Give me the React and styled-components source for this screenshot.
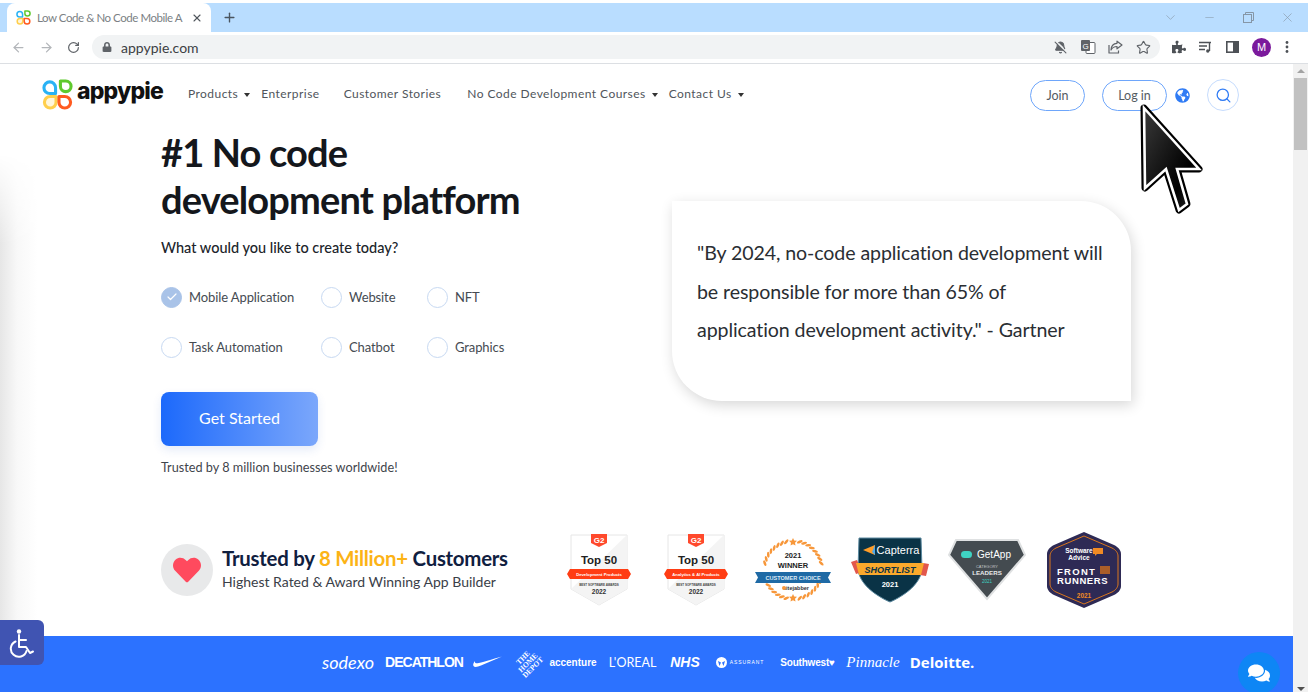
import React from "react";
import styled, { createGlobalStyle } from "styled-components";
import { ArrowLeft, ArrowRight, RotateCw, BellOff, Star, Search, X, Plus, ChevronDown, Minus, Check } from "lucide-react";
import { FaLock, FaPuzzlePiece, FaGlobeAmericas, FaComments, FaHeart } from "react-icons/fa";

const UI = `Lato, "Noto Sans", sans-serif`;

const Global = createGlobalStyle`
  html, body { margin: 0; padding: 0; background: #fff; overflow: hidden; }
  * { box-sizing: border-box; }
  body { font-family: ${UI}; }
`;

const Frame = styled.div`
  position: relative;
  width: 1308px;
  height: 692px;
  overflow: hidden;
  display: flex;
  flex-direction: column;
  padding-top: 3px;
  background: #fff;
`;

/* browser chrome */
const TabStrip = styled.div`
  height: 29px;
  flex: none;
  background: #b9ddff;
  display: flex;
  align-items: flex-end;
  padding-left: 7px;
`;
const Tab = styled.div`
  width: 204px;
  height: 29px;
  background: #fff;
  border-radius: 8px 8px 0 0;
  display: flex;
  align-items: center;
  padding: 0 8px 0 9px;
  font: 11.500px ${UI};
  letter-spacing: -0.45px;
  color: #7b7f84;
  svg { flex: none; }
`;
const TabTitle = styled.span`
  margin-left: 6px;
  flex: 1;
  white-space: nowrap;
`;
const NewTab = styled.div`
  width: 38px;
  height: 29px;
  display: flex;
  align-items: center;
  justify-content: center;
  color: #4a5560;
  margin-left: -1px;
`;
const WinControls = styled.div`
  margin-left: auto;
  height: 29px;
  display: flex;
  align-items: center;
  padding-right: 1px;
  color: #8696a6;
`;
const WinButton = styled.div`
  width: 39px;
  display: flex;
  justify-content: center;
`;
const Toolbar = styled.div`
  height: 32px;
  flex: none;
  display: flex;
  align-items: center;
  background: #fff;
  border-bottom: 1px solid #dcdfe3;
  padding: 0 0 1px 5px;
`;
const NavBtn = styled.div`
  width: 27.500px;
  display: flex;
  justify-content: center;
  color: ${(p) => (p.$on ? "#5f6368" : "#b3b6ba")};
`;
const Omnibox = styled.div`
  margin-left: 4.500px;
  width: 1068px;
  height: 24px;
  border-radius: 12px;
  background: #f1f3f4;
  display: flex;
  align-items: center;
  padding: 0 3px 0 10px;
  font: 14px ${UI};
  color: #3c4043;
`;
const Url = styled.span`
  margin-left: 9px;
`;
const OmniIcons = styled.div`
  margin-left: auto;
  display: flex;
  align-items: center;
  color: #5f6368;
`;
const OmniIcon = styled.div`
  width: 27.500px;
  display: flex;
  justify-content: center;
`;
const ExtIcons = styled.div`
  display: flex;
  align-items: center;
  margin-left: 5px;
  color: #4d5156;
`;
const ExtIcon = styled.div`
  width: ${(p) => p.$w || 27}px;
  display: flex;
  justify-content: center;
`;
const Avatar = styled.div`
  width: 19px;
  height: 19px;
  margin: 0 3px 0 6px;
  border-radius: 50%;
  background: #7b1a9c;
  color: #fff;
  font: 11px "Liberation Sans", sans-serif;
  display: flex;
  align-items: center;
  justify-content: center;
`;

/* page */
const Viewport = styled.div`
  flex: 1;
  display: flex;
  min-height: 0;
`;
const Page = styled.main`
  position: relative;
  flex: 1;
  min-width: 0;
  display: flex;
  flex-direction: column;
  background: #fff;
  &::before {
    content: "";
    position: absolute;
    left: 0;
    top: 90px;
    width: 38px;
    height: 482px;
    background: linear-gradient(to right, #e6e6e6, #f8f8f8 45%, #fff);
    -webkit-mask-image: linear-gradient(to bottom, transparent, #000 90px);
    mask-image: linear-gradient(to bottom, transparent, #000 90px);
  }
`;
const Scrollbar = styled.div`
  width: 15px;
  flex: none;
  background: #f1f1f1;
  display: flex;
  flex-direction: column;
  align-items: center;
  padding-top: 5px;
`;
const ArrowUp = styled.div`
  width: 0;
  height: 0;
  border: 4px solid transparent;
  border-top: 0;
  border-bottom: 4px solid #a3a3a3;
`;
const Thumb = styled.div`
  width: 13px;
  height: 72px;
  margin-top: 5px;
  background: #c1c1c1;
`;
const ArrowDown = styled.div`
  width: 0;
  height: 0;
  margin-top: auto;
  margin-bottom: 1px;
  border: 4px solid transparent;
  border-bottom: 0;
  border-top: 4px solid #505050;
`;

const Nav = styled.nav`
  position: relative;
  height: 62px;
  flex: none;
  display: flex;
  align-items: center;
  padding: 0 54px 0 42px;
`;
const Brand = styled.div`
  display: flex;
  align-items: center;
  width: 146px;
  margin-top: -2px;
`;
const BrandName = styled.span`
  font: 800 23px/1 Inter, sans-serif;
  letter-spacing: -0.8px;
  color: #111;
  margin-left: 4px;
  margin-top: -5px;
`;
const Links = styled.div`
  display: flex;
  align-items: center;
  font: 12px ${UI};
  letter-spacing: 0.45px;
  color: #50555b;
  margin-top: -4px;
`;
const NavLink = styled.span`
  display: inline-flex;
  align-items: center;
  white-space: nowrap;
  margin-right: ${(p) => p.$mr}px;
  &::after {
    content: ${(p) => (p.$caret ? '""' : "none")};
    margin-left: 6px;
    margin-top: 3px;
    border: 3.500px solid transparent;
    border-top: 4px solid #333;
    border-bottom: 0;
  }
`;
const NavRight = styled.div`
  margin-left: auto;
  display: flex;
  align-items: center;
`;
const Pill = styled.div`
  width: ${(p) => p.$w}px;
  height: 31px;
  border: 1px solid #6ea6fb;
  border-radius: 16px;
  margin-right: ${(p) => p.$mr}px;
  display: flex;
  align-items: center;
  justify-content: center;
  font: 12.500px ${UI};
  color: #555c63;
`;
const SearchCircle = styled.div`
  width: 32px;
  height: 32px;
  margin-left: 17px;
  border: 1px solid #c6dcfd;
  border-radius: 50%;
  display: flex;
  align-items: center;
  justify-content: center;
  color: #2f7bf5;
`;

const Hero = styled.section`
  position: relative;
  height: 384px;
  flex: none;
  display: flex;
  padding-left: 161px;
`;
const HeroLeft = styled.div`
  width: 511px;
  flex: none;
`;
const Title = styled.h1`
  margin: 3px 0 0;
  font: 700 38px/47px ${UI};
  letter-spacing: -0.85px;
  color: #14171c;
`;
const Prompt = styled.p`
  margin: 13px 0 0;
  font: 500 14.500px/24px ${UI};
  color: #20242a;
`;
const Options = styled.div`
  margin-top: 25px;
  display: grid;
  grid-template-columns: 160px 106px auto;
  grid-auto-rows: 50px;
`;
const Option = styled.label`
  display: flex;
  align-items: center;
  height: 24px;
  font: 13px ${UI};
  letter-spacing: -0.1px;
  color: #454b52;
`;
const Radio = styled.span`
  width: 21px;
  height: 21px;
  margin-right: 7px;
  border-radius: 50%;
  border: 1px solid ${(p) => (p.$on ? "#a9c3e8" : "#c7d9f2")};
  background: ${(p) => (p.$on ? "#a9c3e8" : "#fff")};
  color: #fff;
  display: flex;
  align-items: center;
  justify-content: center;
`;
const Cta = styled.div`
  width: 157px;
  height: 54px;
  margin-top: 7px;
  padding-bottom: 3px;
  border-radius: 8px;
  background: linear-gradient(90deg, #1c69fb, #7ba7fb);
  box-shadow: 0 4px 10px rgba(40, 90, 200, 0.12);
  color: #fff;
  display: flex;
  align-items: center;
  justify-content: center;
  font: 16px ${UI};
`;
const Note = styled.p`
  margin: 10px 0 0;
  font: 12.700px/22px ${UI};
  color: #3f454c;
`;
const Quote = styled.blockquote`
  margin: 75px 0 0;
  width: 459px;
  height: 200px;
  flex: none;
  padding: 33px 20px 0 25px;
  background: #fff;
  border-radius: 0 50px 0 50px;
  box-shadow: 2px 4px 14px rgba(0, 0, 0, 0.16);
  font: 19.600px/38.500px ${UI};
  letter-spacing: -0.1px;
  color: #2a2e33;
`;

const Trust = styled.section`
  position: relative;
  height: 126px;
  flex: none;
  display: flex;
  align-items: flex-start;
  padding: 20px 0 0 161px;
`;
const HeartDisc = styled.div`
  width: 52px;
  height: 52px;
  flex: none;
  margin-top: 14px;
  border-radius: 50%;
  background: #e8e9ea;
  color: #ff4a5e;
  display: flex;
  align-items: center;
  justify-content: center;
`;
const TrustCopy = styled.div`
  width: 337px;
  flex: none;
  padding: 14px 0 0 9px;
`;
const TrustHead = styled.div`
  font: 700 20.400px/28px ${UI};
  letter-spacing: -0.25px;
  color: #10203f;
  white-space: nowrap;
`;
const Gold = styled.span`
  color: #fcb316;
`;
const TrustSub = styled.div`
  font: 14px/20px ${UI};
  color: #3a4048;
  white-space: nowrap;
`;
const Badges = styled.div`
  display: grid;
  grid-template-columns: repeat(6, 97px);
`;
const BadgeCell = styled.div`
  height: 80px;
  display: flex;
  align-items: center;
  justify-content: center;
`;

const Band = styled.section`
  flex: 1;
  background: #2c72ff;
  display: flex;
  align-items: center;
  padding-left: 321px;
  color: #fff;
  white-space: nowrap;
  padding-bottom: 4px;
`;
const Logo = styled.span`
  flex: none;
  width: ${(p) => p.$w}px;
  margin-right: ${(p) => p.$gap}px;
  display: flex;
  align-items: center;
  justify-content: center;
  gap: 3px;
  font-family: ${(p) => p.$font || `"Liberation Sans", sans-serif`};
  font-size: ${(p) => p.$size}px;
  font-weight: ${(p) => p.$weight || 400};
  font-style: ${(p) => (p.$italic ? "italic" : "normal")};
  letter-spacing: ${(p) => p.$track || 0}px;
`;
const RotatedMark = styled.span`
  display: block;
  transform: rotate(-45deg);
  font: 900 7.500px/7px "Liberation Serif", serif;
  text-align: center;
`;

/* overlays */
const A11y = styled.div`
  position: absolute;
  left: 0;
  top: 620px;
  width: 44px;
  height: 45px;
  border-radius: 0 6px 6px 0;
  background: #4054b2;
  display: flex;
  align-items: center;
  justify-content: center;
`;
const Chat = styled.div`
  position: absolute;
  left: 1238px;
  top: 652px;
  width: 42px;
  height: 42px;
  border-radius: 50%;
  background: #0e86f5;
  color: #fff;
  display: flex;
  align-items: center;
  justify-content: center;
`;
const Pointer = styled.svg`
  position: absolute;
  left: 1138px;
  top: 100px;
`;

const Clover = ({ size }) => (
  <svg width={size} height={size} viewBox="0 0 32 32" fill="none" strokeWidth="3.200" strokeLinejoin="round">
    <path d="M14 15H8A6 6 0 1 1 14 9Z" stroke="#29b2f5" />
    <path d="M19 2H24.500A5.500 5.500 0 1 1 19 7.500Z" stroke="#5fc92e" />
    <path d="M14.500 18V24A6 6 0 1 1 8.500 18Z" stroke="#ffcf4d" fill="#fff6dc" />
    <path d="M17.500 18H23.500A6 6 0 1 1 17.500 24Z" stroke="#ff5a1f" />
  </svg>
);

const TranslateIcon = () => (
  <svg width="16" height="16" viewBox="0 0 16 16">
    <rect x="6" y="3.500" width="9" height="11" rx="1" fill="#fff" stroke="#5f6368" />
    <rect x="1" y="1" width="9" height="11" rx="1" fill="#5f6368" />
    <text x="5.500" y="9.500" textAnchor="middle" fontSize="8" fill="#fff" fontFamily="Liberation Sans">G</text>
  </svg>
);
const ShareIcon = () => (
  <svg width="15" height="14" viewBox="0 0 15 14" fill="none" stroke="#5f6368" strokeWidth="1.200" strokeLinejoin="round">
    <path d="M9 1.200 14 5 9 8.800V6.500C6 6.500 4.300 7.500 3 10c.2-4 2.200-6.500 6-6.700Z" />
    <path d="M1 5v8h9.500v-2.500" />
  </svg>
);
const QueueIcon = () => (
  <svg width="15" height="14" viewBox="0 0 15 14" fill="none" stroke="#4d5156" strokeWidth="1.400">
    <path d="M1 2.500h12M1 6h8M1 9.500h6" />
    <path d="M11.500 3v8" />
    <circle cx="9.800" cy="11" r="1.700" fill="#4d5156" stroke="none" />
  </svg>
);
const SideIcon = () => (
  <svg width="13" height="12" viewBox="0 0 13 12">
    <rect x=".8" y=".8" width="11.400" height="10.400" fill="none" stroke="#4d5156" strokeWidth="1.600" />
    <rect x="7" y="1" width="5" height="10" fill="#4d5156" />
  </svg>
);
const Dots = () => (
  <svg width="4" height="14" viewBox="0 0 4 14" fill="#4d5156">
    <circle cx="2" cy="2.500" r="1.400" /><circle cx="2" cy="7" r="1.400" /><circle cx="2" cy="11.500" r="1.400" />
  </svg>
);
const Restore = () => (
  <svg width="11" height="11" viewBox="0 0 11 11" fill="none" stroke="currentColor">
    <rect x=".5" y="2.500" width="8" height="8" /><path d="M2.500 2.500v-2h8v8h-2" />
  </svg>
);

const Wheelchair = () => (
  <svg width="28" height="30" viewBox="0 0 28 30" fill="none" stroke="#fff" strokeWidth="2" strokeLinecap="round" strokeLinejoin="round">
    <circle cx="11" cy="3.500" r="2.200" fill="#fff" stroke="none" />
    <path d="M11 7v12h7l4 6 3-1.500" />
    <path d="M11 12h7" />
    <path d="M7.500 13.500a8 8 0 1 0 11 9.500" />
  </svg>
);

const CursorArrow = () => {
  const d = "M6 8 L61 69 L39 69 L49 104 L41 110 L28 69 L7 88 Z";
  return (
    <Pointer width="68" height="116" viewBox="0 0 68 116">
      <defs>
        <linearGradient id="cur" x1="0" y1="0" x2="1" y2="1">
          <stop offset="0" stopColor="#3a3a3a" />
          <stop offset="0.7" stopColor="#000" />
          <stop offset="1" stopColor="#333" />
        </linearGradient>
      </defs>
      <path d={d} fill="#000" stroke="#000" strokeWidth="7" strokeLinejoin="round" />
      <path d={d} fill="url(#cur)" stroke="#fff" strokeWidth="2.600" strokeLinejoin="miter" />
    </Pointer>
  );
};

const badgeFont = { fontFamily: '"Liberation Sans", sans-serif' };

const G2Badge = ({ label }) => (
  <svg width="64" height="72" viewBox="0 0 64 72" style={badgeFont}>
    <path d="M4 1h56v54L32 71 4 55Z" fill="#fff" stroke="#e6e6e6" />
    <path d="M60 1v54L32 71 4 55 60 1Z" fill="#f4f4f4" />
    <path d="M24 0h16v9l-8 4-8-4Z" fill="#ff492c" />
    <text x="32" y="9" textAnchor="middle" fontSize="8" fontWeight="700" fill="#fff">G2</text>
    <text x="32" y="30" textAnchor="middle" fontSize="11.500" fontWeight="700" fill="#222">Top 50</text>
    <path d="M3 35h58l3 5-3 5H3l-3-5Z" fill="#ff3d14" />
    <text x="32" y="42" textAnchor="middle" fontSize="4.200" fontWeight="700" fill="#fff">{label}</text>
    <text x="32" y="52" textAnchor="middle" fontSize="3" fontWeight="700" fill="#444">BEST SOFTWARE AWARDS</text>
    <text x="32" y="60" textAnchor="middle" fontSize="6.500" fontWeight="700" fill="#333">2022</text>
  </svg>
);

const SitejabberBadge = () => {
  const leaves = [];
  for (let i = 0; i < 40; i++) {
    const deg = i * 9 + 4.5;
    const a = (deg * Math.PI) / 180;
    if (Math.abs(Math.cos(a)) > 0.985 || Math.abs(Math.sin(a)) > 0.995) continue;
    const cx = 39 + 29 * Math.cos(a);
    const cy = 33 + 29 * Math.sin(a);
    leaves.push(<ellipse key={i} cx={cx} cy={cy} rx="3" ry="1.300" transform={`rotate(${deg + 55} ${cx} ${cy})`} fill="#f7973a" />);
  }
  return (
    <svg width="78" height="66" viewBox="0 0 78 66" style={badgeFont}>
      {leaves}
      <path d="M39 1l1.200 2.500 2.800.3-2 2 .5 2.700-2.500-1.300-2.500 1.300.5-2.700-2-2 2.800-.3Z" fill="#f7973a" />
      <path d="M39 57l1.200 2.500 2.800.3-2 2 .5 2.700-2.500-1.300-2.500 1.300.5-2.700-2-2 2.800-.3Z" fill="#f7973a" />
      <text x="39" y="21" textAnchor="middle" fontSize="7.500" fontWeight="700" fill="#222">2021</text>
      <text x="39" y="31" textAnchor="middle" fontSize="7.500" fontWeight="700" fill="#222">WINNER</text>
      <path d="M1 35h76l-3 5.500 3 5.500H1l3-5.500Z" fill="#1f6aa5" />
      <text x="39" y="43" textAnchor="middle" fontSize="5.600" fontWeight="700" fill="#dbe9f6">CUSTOMER CHOICE</text>
      <text x="42" y="53" textAnchor="middle" fontSize="5.500" fontWeight="700" fill="#333">sitejabber</text>
      <circle cx="30" cy="51" r="2" fill="#f7973a" />
    </svg>
  );
};

const CapterraBadge = () => (
  <svg width="78" height="66" viewBox="0 0 78 66" style={badgeFont}>
    <path d="M8 1h62l1 31c-1 14-16 26-32 33C23 58 8 46 7 32Z" fill="#0a3346" stroke="#5c8aa0" />
    <path d="M12 13l12-5v10Z" fill="#ff9d28" />
    <path d="M24 8v10l-3-3Z" fill="#51a8e8" />
    <text x="47" y="17" textAnchor="middle" fontSize="11" fill="#fff">Capterra</text>
    <path d="M0 25l6-2 5 12-6 2ZM72 26l6 1-3 12-6-1Z" fill="#e2574c" />
    <path d="M5 26h68l-3 12H8Z" fill="#fba92c" />
    <text x="39" y="36" textAnchor="middle" fontSize="9" fontWeight="700" fontStyle="italic" fill="#0a3346">SHORTLIST</text>
    <text x="39" y="50" textAnchor="middle" fontSize="7.500" fontWeight="700" fill="#fff">2021</text>
  </svg>
);

const GetAppBadge = () => (
  <svg width="78" height="62" viewBox="0 0 78 62" style={badgeFont}>
    <path d="M8 1h62l7 15-38 44L1 16Z" fill="#444b50" stroke="#dfe1e2" strokeWidth="2" />
    <rect x="13" y="12" width="11" height="7" rx="3.500" fill="#3fd3c3" />
    <text x="46" y="19" textAnchor="middle" fontSize="10" fill="#fff">GetApp</text>
    <text x="39" y="29" textAnchor="middle" fontSize="4" fill="#c3c7c9">CATEGORY</text>
    <text x="39" y="36" textAnchor="middle" fontSize="6.200" fontWeight="700" fill="#e6e8e9">LEADERS</text>
    <text x="39" y="44" textAnchor="middle" fontSize="4.500" fill="#3fd3c3">2021</text>
  </svg>
);

const SoftwareAdviceBadge = () => (
  <svg width="76" height="78" viewBox="0 0 76 78" style={badgeFont}>
    <path d="M38 1l30 13c4 2 7 5 7 9v32c0 4-3 7-7 9L38 77 8 64c-4-2-7-5-7-9V23c0-4 3-7 7-9Z" fill="#2e2a55" />
    <path d="M38 5l28 12c4 2 6 5 6 8v28c0 3-2 6-6 8L38 73 10 61c-4-2-6-5-6-8V25c0-3 2-6 6-8Z" fill="none" stroke="#d8761e" />
    <text x="33" y="22" textAnchor="middle" fontSize="6.500" fontWeight="700" fill="#fff">Software</text>
    <text x="33" y="29" textAnchor="middle" fontSize="6.500" fontWeight="700" fill="#fff">Advice</text>
    <path d="M47 17h10v6h-6l-2 2v-2h-2Z" fill="#f08a24" />
    <text x="11" y="44" fontSize="9.500" fontWeight="700" letterSpacing="1.300" fill="#fff">FRONT</text>
    <text x="11" y="53" fontSize="9.500" fontWeight="700" letterSpacing="0.600" fill="#fff">RUNNERS</text>
    <text x="38" y="67" textAnchor="middle" fontSize="6.500" fontWeight="700" fill="#f08a24">2021</text>
    <rect x="54" y="35" width="10" height="8" fill="#c96c1e" opacity=".8" />
  </svg>
);

const Swoosh = () => (
  <svg width="29" height="12" viewBox="0 0 29 12" fill="#fff">
    <path d="M29 .5 8 9.500C4.500 11 1.500 11.500.5 10c-.8-1.300 0-3 1.500-5-.3 1.500.3 2.400 2.500 2.300C7 7.200 20 3 29 .5Z" />
  </svg>
);

const AssurantMark = () => (
  <svg width="11" height="11" viewBox="0 0 11 11" fill="#fff">
    <circle cx="5.500" cy="5.500" r="5.500" />
    <path d="M2 4l3 1.500L3.500 9ZM9 4 6 5.500 7.500 9Z" fill="#2c72ff" />
  </svg>
);

const optionRows = [
  ["Mobile Application", true], ["Website"], ["NFT"],
  ["Task Automation"], ["Chatbot"], ["Graphics"],
];

export default function App() {
  return (
    <Frame>
      <Global />
      <TabStrip>
        <Tab>
          <Clover size={15} />
          <TabTitle>Low Code &amp; No Code Mobile A</TabTitle>
          <X size={12} strokeWidth={2.2} color="#50565c" />
        </Tab>
        <NewTab><Plus size={15} strokeWidth={2.2} /></NewTab>
        <WinControls>
          <WinButton><ChevronDown size={15} strokeWidth={1} /></WinButton>
          <WinButton><Minus size={13} strokeWidth={1} /></WinButton>
          <WinButton><Restore /></WinButton>
          <WinButton><X size={15} strokeWidth={1} /></WinButton>
        </WinControls>
      </TabStrip>
      <Toolbar>
        <NavBtn><ArrowLeft size={15} /></NavBtn>
        <NavBtn><ArrowRight size={15} /></NavBtn>
        <NavBtn $on><RotateCw size={13} strokeWidth={2.2} /></NavBtn>
        <Omnibox>
          <FaLock size={10} color="#5f6368" />
          <Url>appypie.com</Url>
          <OmniIcons>
            <OmniIcon><BellOff size={13} fill="#5f6368" /></OmniIcon>
            <OmniIcon><TranslateIcon /></OmniIcon>
            <OmniIcon><ShareIcon /></OmniIcon>
            <OmniIcon><Star size={15} strokeWidth={1.8} /></OmniIcon>
          </OmniIcons>
        </Omnibox>
        <ExtIcons>
          <ExtIcon><FaPuzzlePiece size={14} /></ExtIcon>
          <ExtIcon><QueueIcon /></ExtIcon>
          <ExtIcon><SideIcon /></ExtIcon>
          <Avatar>M</Avatar>
          <ExtIcon $w={25}><Dots /></ExtIcon>
        </ExtIcons>
      </Toolbar>
      <Viewport>
        <Page>
          <Nav>
            <Brand>
              <Clover size={31} />
              <BrandName>appypie</BrandName>
            </Brand>
            <Links>
              <NavLink $caret $mr={11}>Products</NavLink>
              <NavLink $mr={24}>Enterprise</NavLink>
              <NavLink $mr={26}>Customer Stories</NavLink>
              <NavLink $caret $mr={11}>No Code Development Courses</NavLink>
              <NavLink $caret $mr={0}>Contact Us</NavLink>
            </Links>
            <NavRight>
              <Pill $w={55} $mr={17}>Join</Pill>
              <Pill $w={65} $mr={8}>Log in</Pill>
              <FaGlobeAmericas size={15} color="#2f7bf5" />
              <SearchCircle><Search size={17} strokeWidth={1.8} /></SearchCircle>
            </NavRight>
          </Nav>
          <Hero>
            <HeroLeft>
              <Title>#1 No code<br />development platform</Title>
              <Prompt>What would you like to create today?</Prompt>
              <Options>
                {optionRows.map(([name, on]) => (
                  <Option key={name}>
                    <Radio $on={on}>{on && <Check size={12} strokeWidth={2.4} />}</Radio>
                    {name}
                  </Option>
                ))}
              </Options>
              <Cta>Get Started</Cta>
              <Note>Trusted by 8 million businesses worldwide!</Note>
            </HeroLeft>
            <Quote>"By 2024, no-code application development will be responsible for more than 65% of<br />application development activity." - Gartner</Quote>
          </Hero>
          <Trust>
            <HeartDisc><FaHeart size={28} /></HeartDisc>
            <TrustCopy>
              <TrustHead>Trusted by <Gold>8 Million+</Gold> Customers</TrustHead>
              <TrustSub>Highest Rated &amp; Award Winning App Builder</TrustSub>
            </TrustCopy>
            <Badges>
              <BadgeCell><G2Badge label="Development Products" /></BadgeCell>
              <BadgeCell><G2Badge label="Analytics & AI Products" /></BadgeCell>
              <BadgeCell><SitejabberBadge /></BadgeCell>
              <BadgeCell><CapterraBadge /></BadgeCell>
              <BadgeCell><GetAppBadge /></BadgeCell>
              <BadgeCell><SoftwareAdviceBadge /></BadgeCell>
            </Badges>
          </Trust>
          <Band>
            <Logo $w={54} $gap={11} $size={18} $italic $font="Lato, sans-serif">sodexo</Logo>
            <Logo $w={76} $gap={11} $size={14} $weight={700} $track={-1}>DECATHLON</Logo>
            <Logo $w={29} $gap={13}><Swoosh /></Logo>
            <Logo $w={25} $gap={10}><RotatedMark>THE<br />HOME<br />DEPOT</RotatedMark></Logo>
            <Logo $w={46} $gap={11} $size={10} $weight={700}>accenture</Logo>
            <Logo $w={51} $gap={12} $size={12.500} $font="Lato, sans-serif">L'OREAL</Logo>
            <Logo $w={30} $gap={15} $size={14} $weight={700} $italic>NHS</Logo>
            <Logo $w={50} $gap={16} $size={5} $track={0.9}><AssurantMark />ASSURANT</Logo>
            <Logo $w={53} $gap={12} $size={10} $weight={700} $track={-0.2}>Southwest♥</Logo>
            <Logo $w={54} $gap={11} $size={15} $italic $font={`"Liberation Serif", serif`}>Pinnacle</Logo>
            <Logo $w={62} $gap={0} $size={15} $weight={700} $font={`"Open Sans", sans-serif`}>Deloitte.</Logo>
          </Band>
        </Page>
        <Scrollbar>
          <ArrowUp />
          <Thumb />
          <ArrowDown />
        </Scrollbar>
      </Viewport>
      <A11y><Wheelchair /></A11y>
      <Chat><FaComments size={22} /></Chat>
      <CursorArrow />
    </Frame>
  );
}
